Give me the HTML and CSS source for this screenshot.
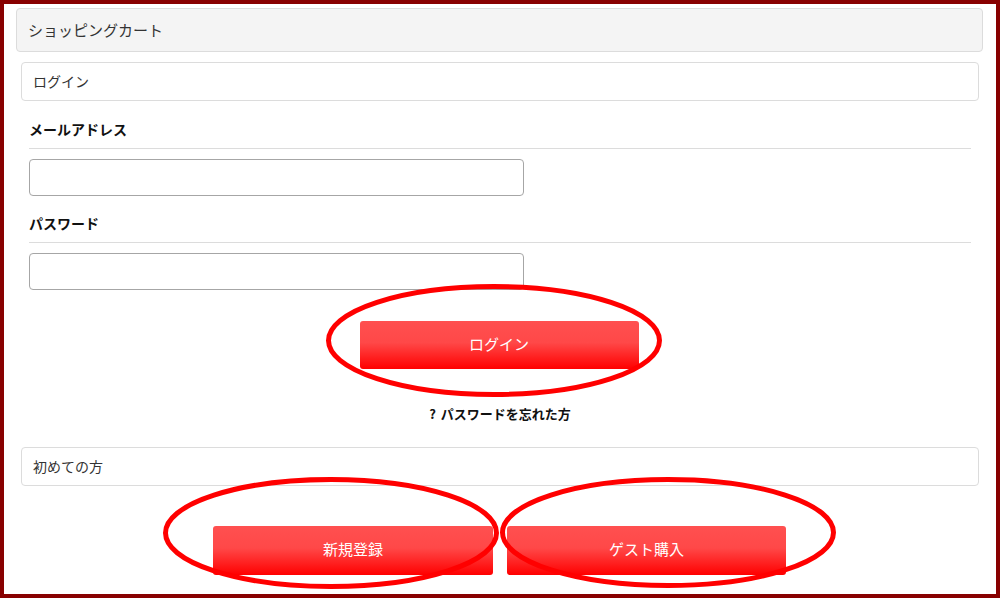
FILE: index.html
```html
<!DOCTYPE html>
<html lang="ja">
<head>
    <meta charset="UTF-8">
    <meta name="viewport" content="width=device-width, initial-scale=1.0">
    <title>ショッピングカート</title>
    <link rel="stylesheet" href="styles.css">
</head>
<body>
    <div class="frame">
        <div class="cart-title">ショッピングカート</div>
        <div class="panel-head">ログイン</div>
        <form class="login-form">
            <label class="field-label" for="email">メールアドレス</label>
            <input class="field-input" type="text" id="email">
            <label class="field-label field-label-pw" for="password">パスワード</label>
            <input class="field-input" type="password" id="password">
            <div class="btn-row btn-row-login">
                <button type="button" class="red-btn">ログイン</button>
            </div>
            <p class="forgot"><span class="q">?</span> パスワードを忘れた方</p>
        </form>
        <div class="panel-head panel-first">初めての方</div>
        <div class="btn-row btn-row-new">
            <button type="button" class="red-btn red-btn-wide">新規登録</button>
            <button type="button" class="red-btn">ゲスト購入</button>
        </div>
    </div>
    <svg class="marks" width="1000" height="598" viewBox="0 0 1000 598">
        <ellipse cx="494" cy="340.5" rx="165.5" ry="54" />
        <ellipse cx="331" cy="533" rx="165.5" ry="53.5" />
        <ellipse cx="668" cy="532.5" rx="165.5" ry="53" />
    </svg>
</body>
</html>
```

FILE: styles.css
```css
body {
    margin: 0;
    padding: 0;
    position: relative;
    font-family: "Noto Sans CJK JP", "Noto Sans", sans-serif;
    color: #333;
    background-color: #fff;
}
.frame {
    box-sizing: border-box;
    width: 1000px;
    height: 598px;
    border: 4px solid #880000;
    padding: 4px 13px 0 12px;
    overflow: hidden;
}
.cart-title {
    height: 42px;
    line-height: 42px;
    padding-left: 11px;
    font-size: 15px;
    background-color: #f4f4f4;
    border: 1px solid #dcdcdc;
    border-radius: 4px;
}
.panel-head {
    height: 37px;
    line-height: 37px;
    margin: 10px 4px 0 5px;
    padding-left: 11px;
    font-size: 14px;
    background-color: #fff;
    border: 1px solid #dcdcdc;
    border-radius: 4px;
}
.panel-first {
    margin-top: 23px;
}
.login-form {
    margin: 0 12px 0 13px;
}
.field-label {
    display: block;
    margin-top: 18px;
    padding-bottom: 9px;
    line-height: 20px;
    font-size: 14px;
    font-weight: bold;
    color: #111;
    border-bottom: 1px solid #dcdcdc;
}
.field-label-pw {
    margin-top: 17px;
}
.field-input {
    display: block;
    box-sizing: border-box;
    width: 495px;
    height: 37px;
    margin-top: 10px;
    border: 1px solid #a6a6a6;
    border-radius: 4px;
    background: #fff;
}
.btn-row {
    display: flex;
    justify-content: center;
    gap: 14px;
}
.btn-row-login {
    margin-top: 31px;
    padding-right: 2px;
}
.btn-row-new {
    margin-top: 40px;
}
.red-btn {
    width: 279px;
    height: 48px;
    padding: 0 0 4px;
    border: none;
    border-radius: 3px;
    color: #fff;
    font-family: inherit;
    font-size: 15px;
    background: linear-gradient(#ff5050 0%, #ff4848 45%, #ff0000 100%);
    cursor: pointer;
}
.btn-row-new .red-btn {
    height: 49px;
}
.red-btn-wide {
    width: 280px;
}
.forgot {
    margin: 35px 0 0;
    line-height: 20px;
    font-size: 13px;
    font-weight: bold;
    color: #111;
    text-align: center;
}
.q {
    font-size: 13px;
    margin-right: 2px;
}
.marks {
    position: absolute;
    top: 0;
    left: 0;
    pointer-events: none;
}
.marks ellipse {
    fill: none;
    stroke: #ff0000;
    stroke-width: 5;
}
```
